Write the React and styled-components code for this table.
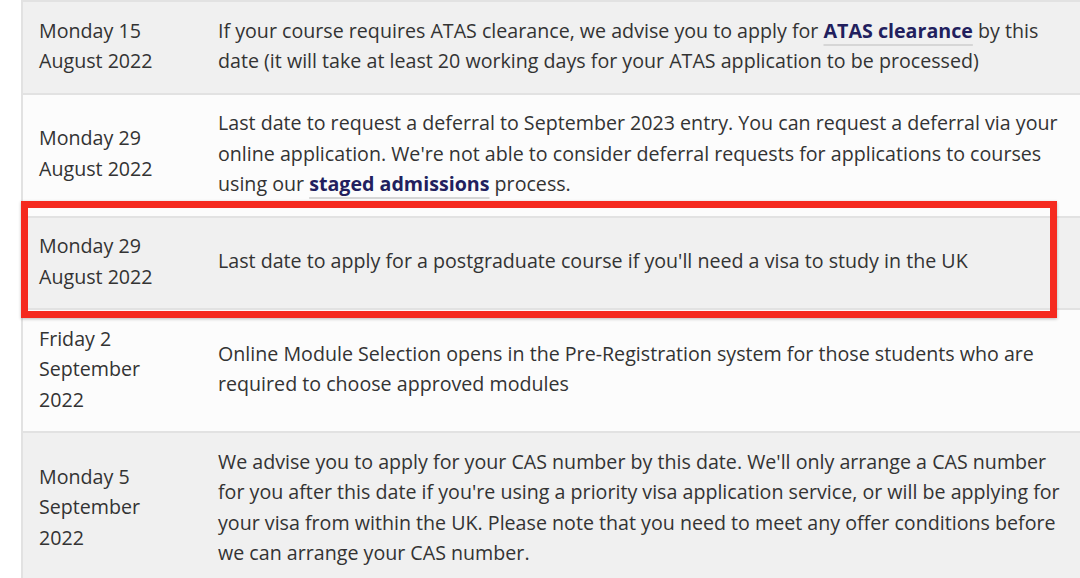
import React from "react";
import styled, { createGlobalStyle } from "styled-components";

const Global = createGlobalStyle`
  html, body { margin: 0; padding: 0; background: #fff; }
  body { font-family: "Open Sans", "Noto Sans", sans-serif; color: #333; overflow: hidden; }
`;

const Page = styled.div`
  position: relative;
  width: 1080px;
  height: 578px;
  overflow: hidden;
  padding-left: 21px;
  box-sizing: border-box;
`;

const Table = styled.table`
  border-collapse: collapse;
  width: 1100px;
  margin-top: 0;
  border-left: 2px solid #e2e2e2;
`;

const Row = styled.tr`
  background: ${(p) => (p.$shade ? "#f0f0f0" : "#fcfcfc")};
  border-top: 2px solid #e2e2e2;
`;

const DateCell = styled.td`
  width: 161px;
  padding: 13.5px 0 16px 16px;
  vertical-align: middle;
  font-size: 19.65px;
  line-height: 30.5px;
  color: #333;
`;

const DescCell = styled.td`
  padding: 13.5px 56px 16px 18px;
  vertical-align: middle;
  font-size: 19.65px;
  line-height: 30.5px;
  color: #333;
`;

const Link = styled.a`
  font-weight: 700;
  color: #221f5e;
  text-decoration: underline;
  text-decoration-color: #d6d6d6;
  text-decoration-thickness: 2px;
  text-underline-offset: 6px;
  text-decoration-skip-ink: none;
`;

const Highlight = styled.div`
  position: absolute;
  left: 21px;
  top: 201px;
  width: 1036px;
  height: 117px;
  box-sizing: border-box;
  border: 7px solid #f52a1f;
  box-shadow: 0 1px 3px rgba(0, 0, 0, 0.25);
  pointer-events: none;
`;

const rows = [
  {
    date: ["Monday 15", "August 2022"],
    desc: (
      <>
        If your course requires ATAS clearance, we advise you to apply for{" "}
        <Link href="#">ATAS clearance</Link> by this date (it will take at least 20 working
        days for your ATAS application to be processed)
      </>
    ),
  },
  {
    date: ["Monday 29", "August 2022"],
    desc: (
      <>
        Last date to request a deferral to September 2023 entry. You can request a deferral
        via your online application. We're not able to consider deferral requests for
        applications to courses using our <Link href="#">staged admissions</Link> process.
      </>
    ),
  },
  {
    date: ["Monday 29", "August 2022"],
    desc: <>Last date to apply for a postgraduate course if you'll need a visa to study in the UK</>,
  },
  {
    date: ["Friday 2", "September", "2022"],
    desc: (
      <>
        Online Module Selection opens in the Pre-Registration system for those students who
        are required to choose approved modules
      </>
    ),
  },
  {
    date: ["Monday 5", "September", "2022"],
    desc: (
      <>
        We advise you to apply for your CAS number by this date. We'll only arrange a CAS
        number for you after this date if you're using a priority visa application service, or
        will be applying for your visa from within the UK. Please note that you need to meet
        any offer conditions before we can arrange your CAS number.
      </>
    ),
  },
];

export default function App() {
  return (
    <>
      <Global />
      <Page>
        <Table>
          <tbody>
            {rows.map((r, i) => (
              <Row key={i} $shade={i % 2 === 0}>
                <DateCell>
                  {r.date.map((d, j) => (
                    <React.Fragment key={j}>
                      {j > 0 && <br />}
                      {d}
                    </React.Fragment>
                  ))}
                </DateCell>
                <DescCell>{r.desc}</DescCell>
              </Row>
            ))}
          </tbody>
        </Table>
        <Highlight />
      </Page>
    </>
  );
}
